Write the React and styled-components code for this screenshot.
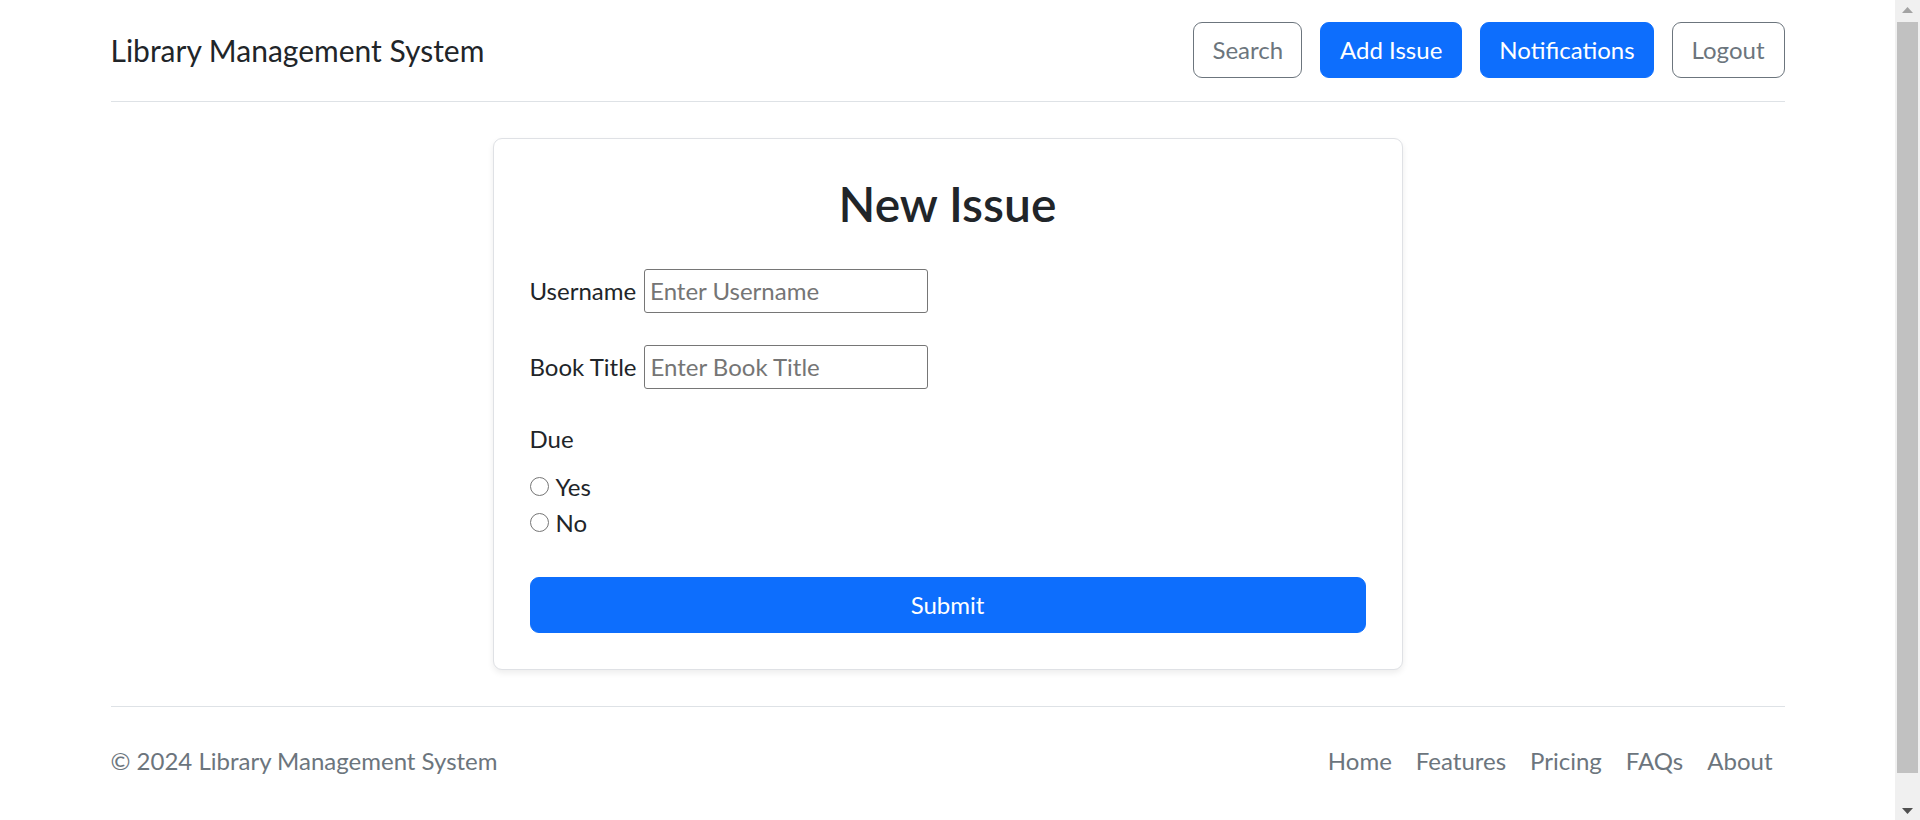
import React from "react";
import styled, { createGlobalStyle } from "styled-components";

const GlobalStyle = createGlobalStyle`
  *, *::before, *::after { box-sizing: border-box; }
  html, body { margin: 0; padding: 0; background: #fff; overflow: hidden; }
  body {
    font-family: Lato, "Noto Sans", sans-serif;
    font-size: 24px;
    line-height: 1.5;
    color: #212529;
  }
`;

const Shell = styled.div`
  display: flex;
  height: 100vh;
  overflow: hidden;
`;

const Viewport = styled.div`
  flex: 1;
  min-width: 0;
  overflow-y: auto;
  scrollbar-width: none;
  &::-webkit-scrollbar { display: none; }
`;

const ScrollBar = styled.div`
  width: 25px;
  flex: none;
  display: flex;
  flex-direction: column;
  background: #f0f0f0;
`;

const ScrollArrow = styled.div`
  height: 22px;
  flex: none;
  display: flex;
  justify-content: center;
  padding-top: ${(p) => p.$offset}px;
`;

const ScrollTrack = styled.div`
  flex: 1;
  padding: 0 2px;
`;

const ScrollThumb = styled.div`
  height: 751px;
  background: #c1c1c1;
`;

const Page = styled.div`
  max-width: 1710px;
  margin: 0 auto;
  padding: 0 18px;
`;

const Header = styled.header`
  display: flex;
  align-items: center;
  justify-content: space-between;
  padding: 22px 0 23px;
  border-bottom: 1px solid #dee2e6;
`;

const Brand = styled.a`
  font-size: 30px;
  line-height: 45px;
  color: #212529;
  text-decoration: none;
`;

const Actions = styled.nav`
  display: flex;
  gap: 18px;
`;

const HeaderButton = styled.button`
  height: 56px;
  padding: 0 ${(p) => p.$pad || 18}px;
  font-family: inherit;
  font-size: 24px;
  line-height: 36px;
  border-radius: 9px;
  border: 1px solid ${(p) => (p.$primary ? "#0d6efd" : "#6c757d")};
  background: ${(p) => (p.$primary ? "#0d6efd" : "#fff")};
  color: ${(p) => (p.$primary ? "#fff" : "#6c757d")};
  cursor: pointer;
`;

const Main = styled.main`
  padding-top: 36px;
`;

const Card = styled.form`
  width: 910px;
  margin: 0 auto;
  padding: 36px;
  background: #fff;
  border: 1px solid #dfe1e5;
  border-radius: 9px;
  box-shadow: 0 3px 6px rgba(0, 0, 0, 0.075);
`;

const Title = styled.h2`
  margin: 0 0 36px;
  font-size: 48px;
  font-weight: 600;
  line-height: 57.6px;
  text-align: center;
  color: #212529;
`;

const Field = styled.div`
  display: flex;
  align-items: center;
  gap: 8px;
  height: 44px;
  margin-bottom: 32px;
`;

const FieldLabel = styled.label`
  font-size: 24px;
  line-height: 36px;
`;

const TextInput = styled.input`
  width: 284px;
  height: 44px;
  padding: 0 5px;
  font-family: inherit;
  font-size: 24px;
  color: #212529;
  border: 1px solid #767676;
  border-radius: 3px;
  background: #fff;
  &::placeholder {
    color: #757575;
  }
`;

const GroupLabel = styled.div`
  line-height: 36px;
  margin: 1.5px 0 12px;
`;

const RadioRow = styled.label`
  display: flex;
  align-items: center;
  gap: 7px;
  height: 36px;
`;

const Radio = styled.input.attrs({ type: "radio" })`
  appearance: none;
  width: 19px;
  height: 19px;
  margin: 0;
  border: 1.5px solid #767676;
  border-radius: 50%;
  background: #fff;
`;

const SubmitButton = styled.button`
  display: block;
  width: 100%;
  height: 56px;
  margin-top: 36px;
  font-family: inherit;
  font-size: 24px;
  line-height: 36px;
  color: #fff;
  background: #0d6efd;
  border: 1px solid #0d6efd;
  border-radius: 9px;
  cursor: pointer;
`;

const Footer = styled.footer`
  display: flex;
  align-items: center;
  justify-content: space-between;
  margin: 36px 0;
  padding: 24px 0;
  border-top: 1px solid #dee2e6;
`;

const Copyright = styled.p`
  margin: 0;
  color: #6c757d;
  line-height: 36px;
`;

const FooterNav = styled.ul`
  display: flex;
  list-style: none;
  margin: 0;
  padding: 0;
`;

const FooterLink = styled.a`
  display: block;
  padding: 12px;
  color: #6c757d;
  line-height: 36px;
  text-decoration: none;
`;

export default function App() {
  return (
    <>
      <GlobalStyle />
      <Shell>
        <Viewport>
          <Page>
            <Header>
              <Brand href="#">Library Management System</Brand>
              <Actions>
                <HeaderButton type="button">Search</HeaderButton>
                <HeaderButton type="button" $primary $pad={19}>
                  Add Issue
                </HeaderButton>
                <HeaderButton type="button" $primary>
                  Notifications
                </HeaderButton>
                <HeaderButton type="button" $pad={19}>
                  Logout
                </HeaderButton>
              </Actions>
            </Header>
            <Main>
              <Card onSubmit={(e) => e.preventDefault()}>
                <Title>New Issue</Title>
                <Field>
                  <FieldLabel htmlFor="username">Username</FieldLabel>
                  <TextInput id="username" placeholder="Enter Username" />
                </Field>
                <Field>
                  <FieldLabel htmlFor="book">Book Title</FieldLabel>
                  <TextInput id="book" placeholder="Enter Book Title" />
                </Field>
                <GroupLabel>Due</GroupLabel>
                <RadioRow>
                  <Radio name="due" value="yes" />
                  Yes
                </RadioRow>
                <RadioRow>
                  <Radio name="due" value="no" />
                  No
                </RadioRow>
                <SubmitButton type="submit">Submit</SubmitButton>
              </Card>
            </Main>
            <Footer>
              <Copyright>© 2024 Library Management System</Copyright>
              <FooterNav>
                {["Home", "Features", "Pricing", "FAQs", "About"].map((l) => (
                  <li key={l}>
                    <FooterLink href="#">{l}</FooterLink>
                  </li>
                ))}
              </FooterNav>
            </Footer>
          </Page>
        </Viewport>
        <ScrollBar aria-hidden="true">
          <ScrollArrow $offset={7}>
            <svg width="11" height="6" viewBox="0 0 11 6">
              <polygon points="0,6 5.5,0 11,6" fill="#a3a3a3" />
            </svg>
          </ScrollArrow>
          <ScrollTrack>
            <ScrollThumb />
          </ScrollTrack>
          <ScrollArrow $offset={10}>
            <svg width="11" height="6" viewBox="0 0 11 6">
              <polygon points="0,0 11,0 5.5,6" fill="#505050" />
            </svg>
          </ScrollArrow>
        </ScrollBar>
      </Shell>
    </>
  );
}
